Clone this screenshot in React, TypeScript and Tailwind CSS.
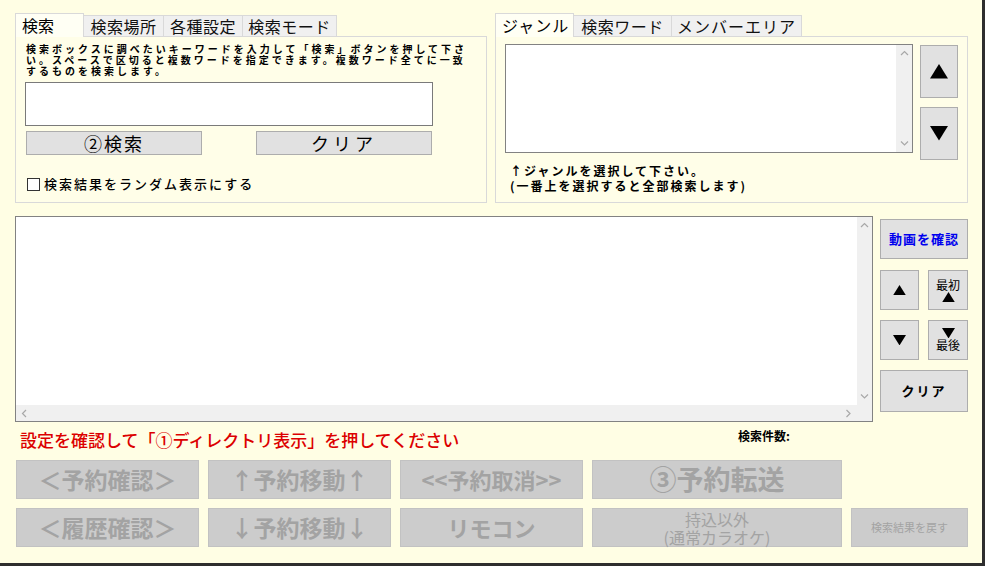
import React from "react";

const Chevron = ({ dir }: { dir: "up" | "down" | "left" | "right" }) => {
  const d =
    dir === "up"
      ? "M1 5 L4.5 1.5 L8 5"
      : dir === "down"
      ? "M1 1.5 L4.5 5 L8 1.5"
      : dir === "left"
      ? "M5 1 L1.5 4.5 L5 8"
      : "M1.5 1 L5 4.5 L1.5 8";
  const w = dir === "up" || dir === "down" ? 9 : 7;
  const h = dir === "up" || dir === "down" ? 7 : 9;
  return (
    <svg width={w} height={h} viewBox={`0 0 ${w} ${h}`}>
      <path d={d} fill="none" stroke="#a8a8a8" strokeWidth="1.2" />
    </svg>
  );
};

const Tri = ({ up, size = 18 }: { up?: boolean; size?: number }) => (
  <svg width={size} height={size * 0.8} viewBox="0 0 10 8">
    <path d={up ? "M5 0 L10 8 L0 8 Z" : "M0 0 L10 0 L5 8 Z"} fill="#000" />
  </svg>
);

const TabSel = ({ w, children }: { w: number; children: React.ReactNode }) => (
  <div
    className="h-[24px] bg-[#fffff4] border border-b-0 border-[#d9d9d9] text-[16px] leading-[22px] px-[6px] text-black relative top-[1px] whitespace-nowrap"
    style={{ width: w }}
  >
    {children}
  </div>
);

const Tab = ({ w, children }: { w: number; children: React.ReactNode }) => (
  <div
    className="h-[21px] bg-[#f0f0f0] border border-b-0 border-l-0 border-[#d9d9d9] text-[16px] leading-[20px] text-center text-[#111] tracking-[0.5px] whitespace-nowrap"
    style={{ width: w }}
  >
    {children}
  </div>
);

const Gray = ({ w, children, cls = "" }: { w: number; children: React.ReactNode; cls?: string }) => (
  <div
    className={`h-[39px] bg-[#cccccc] border border-[#c2c2c2] flex items-center justify-center text-[#a3a3a3] whitespace-nowrap ${cls}`}
    style={{ width: w }}
  >
    {children}
  </div>
);

export default function App() {
  return (
    <div className="w-[985px] h-[566px] bg-[#2e2e2e] font-['Noto_Sans_CJK_JP','Noto_Sans',sans-serif]">
      <div className="w-[982px] h-[563px] bg-[#fffee4] pt-[13px] pl-[15px] flex flex-col">
        {/* top row */}
        <div className="flex gap-[8px]">
          {/* left panel */}
          <div className="w-[472px] flex flex-col">
            <div className="flex items-end h-[23px]">
              <TabSel w={69}>検索</TabSel>
              <Tab w={80}>検索場所</Tab>
              <Tab w={79}>各種設定</Tab>
              <Tab w={94}>検索モード</Tab>
            </div>
            <div className="h-[167px] border border-[#d9d9d9] bg-[#fffee8] pt-[6px] pl-[9px] flex flex-col">
              <div className="text-[10px] leading-[11px] font-bold tracking-[3px] text-black pl-[1px] whitespace-nowrap">
                <div>検索ボックスに調べたいキーワードを入力して「検索」ボタンを押して下さ</div>
                <div>い。スペースで区切ると複数ワードを指定できます。複数ワード全てに一致</div>
                <div>するものを検索します。</div>
              </div>
              <div className="mt-[6px] w-[408px] h-[44px] bg-white border border-[#7a7a7a]" />
              <div className="mt-[5px] flex pl-[1px] gap-[54px]">
                <div className="w-[176px] h-[24px] bg-[#e1e1e1] border border-[#adadad] flex items-center justify-center text-[18px] tracking-[2px] text-black">
                  ②検索
                </div>
                <div className="w-[176px] h-[24px] bg-[#e1e1e1] border border-[#adadad] flex items-center justify-center text-[18px] tracking-[4px] text-black">
                  クリア
                </div>
              </div>
              <div className="mt-[22px] flex items-center pl-[2px] h-[14px]">
                <div className="w-[13px] h-[13px] bg-white border border-[#333]" />
                <span className="ml-[4px] text-[13px] leading-[14px] font-medium tracking-[2px] text-black whitespace-nowrap">
                  検索結果をランダム表示にする
                </span>
              </div>
            </div>
          </div>
          {/* right panel */}
          <div className="w-[473px] flex flex-col">
            <div className="flex items-end h-[23px]">
              <TabSel w={79}>
                <span className="tracking-[1px]">ジャンル</span>
              </TabSel>
              <Tab w={98}>検索ワード</Tab>
              <Tab w={130}>
                <span className="tracking-[1px]">メンバーエリア</span>
              </Tab>
            </div>
            <div className="h-[167px] border border-[#d9d9d9] bg-[#fffee8] pt-[7px] pl-[9px] flex flex-col">
              <div className="flex gap-[7px]">
                <div className="w-[408px] h-[109px] bg-white border border-[#828282] flex justify-end">
                  <div className="w-[16px] h-full bg-[#f0f0f0] flex flex-col items-center justify-between py-[5px]">
                    <Chevron dir="up" />
                    <Chevron dir="down" />
                  </div>
                </div>
                <div className="flex flex-col gap-[9px] pt-[1px]">
                  <div className="w-[38px] h-[53px] bg-[#e1e1e1] border border-[#adadad] flex items-center justify-center">
                    <Tri up />
                  </div>
                  <div className="w-[38px] h-[53px] bg-[#e1e1e1] border border-[#adadad] flex items-center justify-center">
                    <Tri />
                  </div>
                </div>
              </div>
              <div className="mt-[3px] pl-[5px] text-[12px] leading-[15px] font-bold tracking-[2px] text-black whitespace-nowrap">
                <div>↑ジャンルを選択して下さい。</div>
                <div>(一番上を選択すると全部検索します)</div>
              </div>
            </div>
          </div>
        </div>

        {/* middle row */}
        <div className="mt-[13px] flex gap-[7px]">
          <div className="w-[858px] h-[206px] bg-white border border-[#828282] flex flex-col">
            <div className="flex-1 flex">
              <div className="flex-1" />
              <div className="w-[15px] bg-[#f0f0f0] flex flex-col items-center justify-between py-[5px]">
                <Chevron dir="up" />
                <Chevron dir="down" />
              </div>
            </div>
            <div className="h-[16px] flex">
              <div className="flex-1 bg-[#f0f0f0] flex items-center justify-between px-[5px]">
                <Chevron dir="left" />
                <Chevron dir="right" />
              </div>
              <div className="w-[15px] bg-[#f0f0f0]" />
            </div>
          </div>
          <div className="w-[88px] pt-[3px] flex flex-col">
            <div className="h-[40px] bg-[#e1e1e1] border border-[#adadad] flex items-center justify-center text-[13px] font-bold text-[#0000ee] tracking-[1px]">
              動画を確認
            </div>
            <div className="mt-[11px] flex gap-[9px]">
              <div className="w-[39px] h-[40px] bg-[#e1e1e1] border border-[#adadad] flex items-center justify-center">
                <Tri up size={13} />
              </div>
              <div className="w-[40px] h-[40px] bg-[#e1e1e1] border border-[#adadad] flex flex-col items-center justify-center leading-[14px] text-[12px] text-black">
                <span>最初</span>
                <Tri up size={13} />
              </div>
            </div>
            <div className="mt-[10px] flex gap-[9px]">
              <div className="w-[39px] h-[40px] bg-[#e1e1e1] border border-[#adadad] flex items-center justify-center">
                <Tri size={13} />
              </div>
              <div className="w-[40px] h-[40px] bg-[#e1e1e1] border border-[#adadad] flex flex-col items-center justify-center leading-[14px] text-[12px] text-black">
                <Tri size={13} />
                <span>最後</span>
              </div>
            </div>
            <div className="mt-[10px] h-[42px] bg-[#e1e1e1] border border-[#adadad] flex items-center justify-center text-[13px] font-bold text-black tracking-[2px]">
              クリア
            </div>
          </div>
        </div>

        {/* message row */}
        <div className="h-[38px] flex pl-[5px]">
          <div className="w-[718px] pt-[8px] text-[17px] leading-[20px] font-medium text-[#dc0000] whitespace-nowrap">
            設定を確認して「①ディレクトリ表示」を押してください
          </div>
          <div className="pt-[6px] text-[12px] leading-[16px] font-bold text-black">検索件数:</div>
        </div>

        {/* bottom buttons */}
        <div className="flex gap-[9px] pl-[1px]">
          <Gray w={183} cls="text-[23px] font-bold">＜予約確認＞</Gray>
          <Gray w={183} cls="text-[23px] font-bold">↑予約移動↑</Gray>
          <Gray w={183} cls="text-[22px] font-bold">&lt;&lt;予約取消&gt;&gt;</Gray>
          <Gray w={250} cls="text-[27px] font-bold text-[#999999]">③予約転送</Gray>
        </div>
        <div className="mt-[9px] flex gap-[9px] pl-[1px]">
          <Gray w={183} cls="text-[23px] font-bold">＜履歴確認＞</Gray>
          <Gray w={183} cls="text-[23px] font-bold">↓予約移動↓</Gray>
          <Gray w={183} cls="text-[22px] font-bold">リモコン</Gray>
          <Gray w={250} cls="flex-col text-[16px] leading-[18px] pt-[1px]">
            <span>持込以外</span>
            <span>(通常カラオケ)</span>
          </Gray>
          <Gray w={117} cls="text-[11px]">検索結果を戻す</Gray>
        </div>
      </div>
    </div>
  );
}
